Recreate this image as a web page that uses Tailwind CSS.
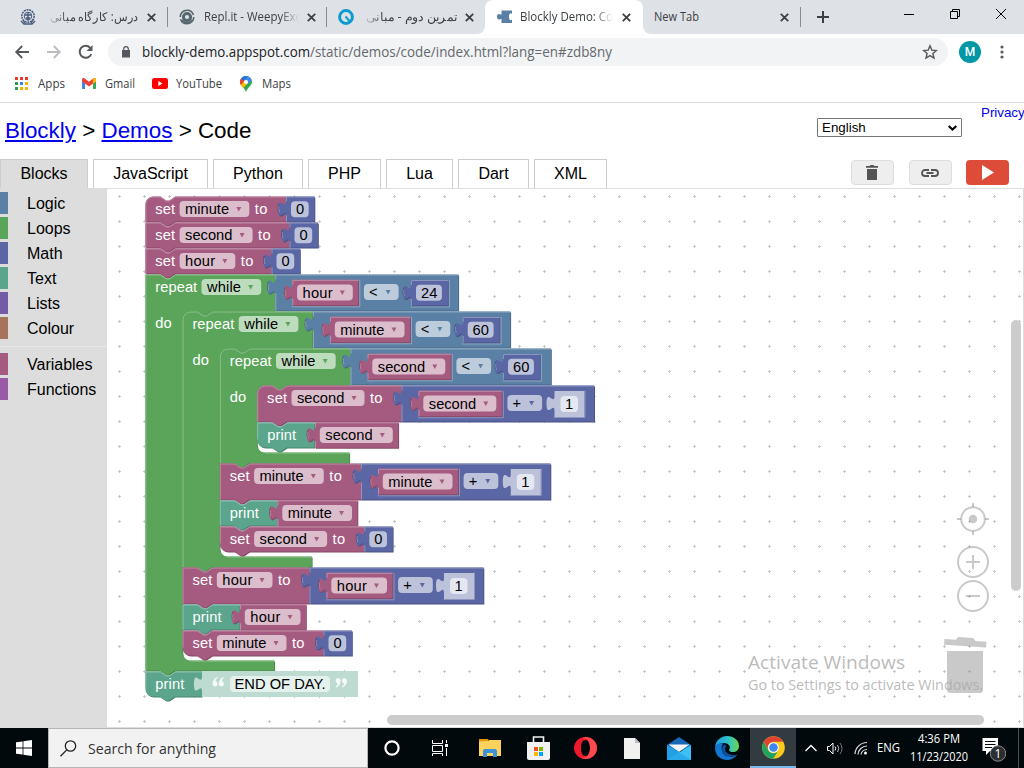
<!DOCTYPE html>
<html lang="en">
<head>
<meta charset="utf-8">
<title>Blockly Demo: Code</title>
<script src="https://cdn.jsdelivr.net/npm/@tailwindcss/browser@4"></script>
</head>
<body class="w-[1024px] h-[768px] overflow-hidden flex flex-col bg-white font-['Open_Sans','Noto_Sans',sans-serif] text-[12px] text-[#3c4043]">

<!-- Tab strip -->
<div class="h-[34px] flex bg-[#dee1e6] shrink-0">
  <div class="w-[168px] flex items-center relative pl-5">
    <svg class="w-4 h-4 shrink-0" viewBox="0 0 16 16" fill="none" stroke="#44597c"><circle cx="8" cy="7" r="6.2" stroke-dasharray="2 .7" stroke-width="1.5"/><circle cx="8" cy="7" r="3.8"/><path d="M8 3v9M5 6h6M6 9h4M1 12l3 3h8l3-3M3 11l2 3M13 11l-2 3" stroke-width="1.3"/></svg>
    <div class="ml-3.5 shrink-0 w-[88px] overflow-hidden mask-l-from-80% mask-l-to-105%"><span data-w="88" class="block h-4">درس: کارگاه مبانی</span></div>
    <svg class="w-[9px] h-[9px] ml-[9px]" viewBox="0 0 9 9" stroke="#3c4043" stroke-width="1.8"><path d="M.8.8l7.4 7.4M8.2.8L.8 8.2"/></svg>
    <div class="absolute right-0 top-[7px] h-5 w-px bg-[#888b90]"></div>
  </div>
  <div class="w-[159px] flex items-center relative pl-[11px]">
    <svg class="w-4 h-4 shrink-0" viewBox="0 0 16 16" fill="none" stroke="#56676e"><circle cx="8" cy="8" r="6.8" stroke-width="1.6" stroke-dasharray="19 2.3"/><circle cx="8" cy="8" r="3.6" stroke-width="3"/><path d="M3 11c2 3 7 3.500 10 0" stroke-width="1.4"/></svg>
    <div class="ml-[9px] shrink-0 w-[95px] overflow-hidden mask-r-from-80% mask-r-to-100%"><span data-w="97" class="block h-4">Repl.it - WeepyExc</span></div>
    <svg class="w-[9px] h-[9px] ml-2" viewBox="0 0 9 9" stroke="#3c4043" stroke-width="1.8"><path d="M.8.8l7.4 7.4M8.2.8L.8 8.2"/></svg>
    <div class="absolute right-0 top-[7px] h-5 w-px bg-[#888b90]"></div>
  </div>
  <div class="w-[158px] flex items-center pl-[11px]">
    <svg class="w-4 h-4 shrink-0" viewBox="0 0 16 16" fill="none"><circle cx="8" cy="8" r="6.4" stroke="#0a9bd0" stroke-width="3"/><path d="M7.500 7.500l4 4.500" stroke="#0a9bd0" stroke-width="2"/></svg>
    <div class="ml-3 shrink-0 w-[91px] overflow-hidden mask-l-from-80% mask-l-to-105%"><span data-w="91" class="block h-4">تمرین دوم - مبانی</span></div>
    <svg class="w-[9px] h-[9px] ml-2" viewBox="0 0 9 9" stroke="#3c4043" stroke-width="1.8"><path d="M.8.8l7.4 7.4M8.2.8L.8 8.2"/></svg>
  </div>
  <div class="w-[158px] flex items-center pl-3 relative bg-white rounded-t-lg">
    <svg class="absolute -left-2 bottom-0 w-2 h-2" viewBox="0 0 8 8"><path d="M8 0v8H0a8 8 0 0 0 8-8z" fill="#fff"/></svg>
    <svg class="absolute -right-2 bottom-0 w-2 h-2" viewBox="0 0 8 8"><path d="M0 0v8h8a8 8 0 0 1-8-8z" fill="#fff"/></svg>
    <svg class="w-4 h-4 shrink-0" viewBox="0 0 16 16"><path d="M4.500 1.500H15v3.500c-1-1.500-3-1-3 2.700s2 4.200 3 2.700V14H4.500v-4C4 9 3.500 10.500 2 10.500S0 9 0 7.500 1 4.800 2.300 5s2 1.200 2.200.3z" fill="#5b80a5"/></svg>
    <div class="ml-[7px] shrink-0 w-[93px] overflow-hidden mask-r-from-80% mask-r-to-100%"><span data-w="93" class="block h-4">Blockly Demo: Co</span></div>
    <svg class="w-[9px] h-[9px] ml-[9px]" viewBox="0 0 9 9" stroke="#3c4043" stroke-width="1.8"><path d="M.8.8l7.4 7.4M8.2.8L.8 8.2"/></svg>
  </div>
  <div class="w-[158px] flex items-center relative pl-[11px]">
    <span data-w="45" class="block h-4">New Tab</span>
    <svg class="w-[9px] h-[9px] ml-[81px]" viewBox="0 0 9 9" stroke="#3c4043" stroke-width="1.8"><path d="M.8.8l7.4 7.4M8.2.8L.8 8.2"/></svg>
    <div class="absolute right-0 top-[7px] h-5 w-px bg-[#888b90]"></div>
  </div>
  <div class="w-[85px] flex items-center pl-4"><svg class="w-3 h-3" viewBox="0 0 12 12" stroke="#3c4043" stroke-width="2"><path d="M6 0v12M0 6h12"/></svg></div>
  <div class="flex h-[28px] items-center">
    <div class="w-[46px] flex justify-center"><svg class="w-[10px] h-[10px]" viewBox="0 0 10 10"><path d="M0 5.500h10" stroke="#000"/></svg></div>
    <div class="w-[46px] flex justify-center"><svg class="w-[10px] h-[10px]" viewBox="0 0 10 10"><path d="M.5 2.500h7v7h-7zM2.500 2V.5h7v7H8" fill="none" stroke="#000"/></svg></div>
    <div class="w-[46px] flex justify-center"><svg class="w-[10px] h-[10px]" viewBox="0 0 10 10"><path d="M0 0l10 10M10 0L0 10" stroke="#000"/></svg></div>
  </div>
</div>

<!-- Address bar -->
<div class="h-9 flex items-center shrink-0 pl-[14px] pr-4">
  <svg class="w-4 h-4" viewBox="0 0 16 16" fill="none" stroke="#55585c" stroke-width="1.8"><path d="M15 8H2.500M8.200 2L2.200 8l6 6"/></svg>
  <svg class="w-4 h-4 ml-4" viewBox="0 0 16 16" fill="none" stroke="#bbbcbf" stroke-width="1.8"><path d="M1 8h12.500M7.800 2l6 6-6 6"/></svg>
  <svg class="w-4 h-4 ml-4" viewBox="0 0 16 16" fill="none" stroke="#55585c" stroke-width="2"><path d="M13.300 10A6 6 0 1 1 12.200 3.800"/><path d="M14.500 1v6h-6z" fill="#55585c" stroke="none"/></svg>
  <div class="ml-[14px] w-[840px] h-7 rounded-full bg-[#f1f3f4] flex items-center pl-[14px] pr-[10px] text-[14px]">
    <svg class="w-2 h-3" viewBox="0 0 8 12"><path d="M0 4h8v7.500H0z" fill="#55585c"/><path d="M1.700 4.500V3a2.300 2.300 0 0 1 4.600 0v1.500" fill="none" stroke="#55585c" stroke-width="1.200"/></svg>
    <span class="ml-3 text-[#202124] block h-4" data-w="168" data-y="13">blockly-demo.appspot.com</span><span class="text-[#65686d] block h-4" data-w="302" data-y="13">/static/demos/code/index.html?lang=en#zdb8ny</span>
    <svg class="w-4 h-4 ml-auto" viewBox="0 0 16 16" fill="none" stroke="#55585c" stroke-width="1.400"><path d="M8 1.800l1.800 4.300 4.600.4-3.500 3 1.100 4.500-4-2.400-4 2.400 1.100-4.500-3.500-3 4.600-.4z"/></svg>
  </div>
  <div class="ml-[11px] w-[22px] h-[22px] rounded-full bg-[#0097a7] text-white text-[12px] font-['Roboto'] font-medium flex items-center justify-center">M</div>
  <svg class="w-1 h-4 ml-[19px]" viewBox="0 0 4 16" fill="#55585c"><circle cx="2" cy="3" r="1.600"/><circle cx="2" cy="8" r="1.600"/><circle cx="2" cy="13" r="1.600"/></svg>
</div>

<!-- Bookmarks -->
<div class="h-[33px] flex items-center pl-[15px] pb-[5px] shrink-0 border-b border-[#dadce0]">
  <svg class="w-[13px] h-[13px]" viewBox="0 0 13 13"><path d="M0 0h3v3H0zM5 0h3v3H5zM10 0h3v3h-3z" fill="#e33b2e"/><path d="M0 5h3v3H0z" fill="#2f9e4f"/><path d="M5 5h3v3H5z" fill="#2f86ee"/><path d="M10 5h3v3h-3z" fill="#f4b400"/><path d="M0 10h3v3H0z" fill="#2f9e4f"/><path d="M5 10h3v3H5zM10 10h3v3h-3z" fill="#f4b400"/></svg>
  <span class="ml-[10px] block h-4" data-w="27">Apps</span>
  <svg class="w-[14px] h-[11px] ml-[17px]" viewBox="0 0 14 11"><path d="M0 2v8.200q0 .8.800.8H3V4z" fill="#4285f4"/><path d="M14 2v8.200q0 .8-.8.800H11V4z" fill="#34a853"/><path d="M0 3.500V1.700C0 0 1.600-.4 2.700.5L7 3.800 11.300.5C12.400-.4 14 0 14 1.700v1.800L7 8.500z" fill="#ea4335"/><path d="M11 .8v4.900l3-2.200V1.700C14 0 12.400-.4 11 .8z" fill="#fbbc04"/></svg>
  <span class="ml-[9px] block h-4" data-w="30">Gmail</span>
  <svg class="w-4 h-[11px] ml-[17px]" viewBox="0 0 16 11"><rect width="16" height="11" rx="2.500" fill="#f00"/><path d="M6.300 3v5l4.200-2.500z" fill="#fff"/></svg>
  <span class="ml-2 block h-4" data-w="46">YouTube</span>
  <svg class="w-3 h-4 ml-[18px]" viewBox="0 0 12 16"><path d="M6 0a6 6 0 0 0-6 6c0 3.500 4 5 6 10 2-5 6-6.500 6-10a6 6 0 0 0-6-6z" fill="#34a853"/><path d="M6 0a6 6 0 0 0-5 2.500L4 5l4.500-4.500Q7.500 0 6 0z" fill="#1a73e8"/><path d="M1 2.500A6 6 0 0 0 .8 9L4.500 5.200z" fill="#ea4335"/><path d="M.8 9q.7 1.400 2.400 3L11 4Q10 1.500 8.500.6z" fill="#fbbc04"/><path d="M8.500.5Q11 1.500 11.700 4.300L8 8 4.500 4.800z" fill="#4285f4"/><circle cx="6" cy="6" r="2.100" fill="#fff"/></svg>
  <span class="ml-[10px] block h-4" data-w="29">Maps</span>
</div>

<!-- Page -->
<div class="h-[625px] shrink-0 flex flex-col font-['Liberation_Sans',Arial,sans-serif] text-black text-[16px]">
  <div class="h-[56px] flex">
    <h1 class="shrink-0 pl-[5px] pt-[11px] text-[22.400px] leading-[33px] w-[817px]"><a class="text-[#0000ee] underline">Blockly</a> &gt; <a class="text-[#0000ee] underline">Demos</a> &gt; Code</h1>
    <div class="shrink-0 mt-[15px] w-[145px] h-[19px] border border-[#767676] flex items-center pl-1 pr-1 text-[13.333px] rounded-[1px]">English<svg class="ml-auto w-[9px] h-[6px]" viewBox="0 0 9 6" fill="none" stroke="#000" stroke-width="2"><path d="M.7.900l3.800 3.600L8.300.900"/></svg></div>
    <a class="ml-[19px] mt-[1px] text-[13.333px] leading-[17px] text-[#0000ee]">Privacy</a>
  </div>
  <div class="h-[30px] flex border-b border-[#ddd] pr-[15px]">
    <div class="w-[88px] h-[29px] bg-[#ddd] border border-b-0 border-[#ccc] flex items-center justify-center">Blocks</div>
    <div class="ml-[5px] w-[115px] h-[29px] border border-b-0 border-[#ccc] flex items-center justify-center">JavaScript</div>
    <div class="ml-[5px] w-[90px] h-[29px] border border-b-0 border-[#ccc] flex items-center justify-center">Python</div>
    <div class="ml-[5px] w-[73px] h-[29px] border border-b-0 border-[#ccc] flex items-center justify-center">PHP</div>
    <div class="ml-[5px] w-[67px] h-[29px] border border-b-0 border-[#ccc] flex items-center justify-center">Lua</div>
    <div class="ml-[5px] w-[71px] h-[29px] border border-b-0 border-[#ccc] flex items-center justify-center">Dart</div>
    <div class="ml-[5px] w-[73px] h-[29px] border border-b-0 border-[#ccc] flex items-center justify-center">XML</div>
    <div class="ml-auto mt-[1px] w-[43px] h-[25px] rounded bg-[#eee] border border-[#ddd] flex items-center justify-center pr-px"><svg class="w-3 h-[15px]" viewBox="0 0 12 15" fill="#555"><path d="M0 1h3.500l1-1h3l1 1H12v1.800H0zM1 4h10v11H1z"/></svg></div>
    <div class="ml-[15px] mt-[1px] w-[43px] h-[25px] rounded bg-[#eee] border border-[#ddd] flex items-center justify-center pr-px"><svg class="w-[18px] h-2" viewBox="0 0 18 8" fill="none" stroke="#555" stroke-width="1.800"><path d="M8 1H4a3 3 0 0 0 0 6h4M10 1h4a3 3 0 0 1 0 6h-4M5.500 4h7"/></svg></div>
    <div class="ml-[14px] mt-[1px] w-[43px] h-[25px] rounded bg-[#dd4b39] flex items-center justify-center"><svg class="w-3 h-[15px]" viewBox="0 0 12 15"><path d="M0 0l12 7.500L0 15z" fill="#fff"/></svg></div>
  </div>
  <div class="h-[539px] flex">
    <div class="w-[107px] bg-[#ddd] pt-[3px] flex flex-col leading-[24px]">
      <div class="h-[22px] mb-[3px] border-l-8 border-[#5b80a5] pl-[19px]">Logic</div>
      <div class="h-[22px] mb-[3px] border-l-8 border-[#5ba55b] pl-[19px]">Loops</div>
      <div class="h-[22px] mb-[3px] border-l-8 border-[#5b67a5] pl-[19px]">Math</div>
      <div class="h-[22px] mb-[3px] border-l-8 border-[#5ba58c] pl-[19px]">Text</div>
      <div class="h-[22px] mb-[3px] border-l-8 border-[#745ba5] pl-[19px]">Lists</div>
      <div class="h-[22px] border-l-8 border-[#a5745b] pl-[19px]">Colour</div>
      <div class="h-px my-[7px] bg-[#e8e8e8]"></div>
      <div class="h-[22px] mb-[3px] -mt-px border-l-8 border-[#a55b80] pl-[19px]">Variables</div>
      <div class="h-[22px] border-l-8 border-[#995ba5] pl-[19px]">Functions</div>
    </div>
    <svg id="workspace" class="w-[917px] h-[539px] block" viewBox="107 189 917 539" font-family="Liberation Sans, Arial, sans-serif" font-size="14.667">
      <defs><pattern id="grid" x="107" y="184" width="25" height="25" patternUnits="userSpaceOnUse"><path d="M11 12.500h3M12.500 11v3" stroke="#c8c8c8"/></pattern></defs>
      <rect x="107" y="189" width="917" height="539" fill="url(#grid)"/>
      <g id="blocks"></g>
      <path d="M107 727.500H1023.500V189" fill="none" stroke="#ddd"/>
      <g fill="#ccc"><rect x="1011" y="320" width="10" height="271" rx="5"/><rect x="387" y="715" width="597" height="10" rx="5"/></g>
      <g fill="none" stroke="#888" stroke-opacity=".45" stroke-width="2">
        <circle cx="973" cy="519" r="11.800"/><path d="M973 503v4M973 531v4M957 519h4M985 519h4"/><circle cx="973" cy="519" r="4.300" fill="#888" fill-opacity=".45" stroke="none"/>
        <circle cx="973" cy="562" r="15"/><path d="M966 562h14M973 555v14"/>
        <circle cx="973" cy="596" r="15"/><path d="M966 596h14"/>
      </g>
      <g fill="#888" fill-opacity=".45"><path d="M944.500 639l11.500.800 2-2.800 15 1 2.500 3 11 .800-.5 5.700-42-2.700z"/><path d="M947 651h36v38.500q0 3.500-3.500 3.500h-29q-3.500 0-3.500-3.500z"/></g>
      <g font-family="Open Sans, Noto Sans, sans-serif" fill="#a9a9a9" fill-opacity=".8"><text x="748" y="669" font-size="19" textLength="157" lengthAdjust="spacingAndGlyphs">Activate Windows</text><text x="748" y="690" font-size="14" textLength="235" lengthAdjust="spacingAndGlyphs">Go to Settings to activate Windows.</text></g>
    </svg>
  </div>
</div>

<!-- Taskbar -->
<div class="h-10 bg-[#01090d] flex shrink-0 text-white items-center">
  <div class="w-12 flex justify-center shrink-0"><svg class="w-4 h-4" viewBox="0 0 16 16" fill="#fff"><path d="M0 2.300L6.600 1.400v6.200H0zM7.400 1.300L16 0v7.600H7.400zM0 8.400h6.600v6.200L0 13.700zM7.400 8.400H16V16l-8.600-1.300z"/></svg></div>
  <div class="w-80 shrink-0 h-10 bg-[#f2f2f2] border border-[#b5b5b5] flex items-center pl-[11px] text-[#333] text-[14px]">
    <svg class="w-[17px] h-[17px]" viewBox="0 0 17 17" fill="none" stroke="#222" stroke-width="1.300"><circle cx="10.500" cy="6" r="5.200"/><path d="M6.700 9.900L.5 16.300"/></svg>
    <span class="ml-[11px] block h-4" data-w="128" data-y="14">Search for anything</span>
  </div>
  <div class="w-12 shrink-0 flex justify-center"><svg class="w-4 h-4" viewBox="0 0 16 16"><circle cx="8" cy="8" r="6.600" fill="none" stroke="#fff" stroke-width="2.200"/></svg></div>
  <div class="w-12 shrink-0 flex justify-center"><svg class="w-4 h-4" viewBox="0 0 16 16" fill="none" stroke="#fff"><path d="M.5 0v3.500h10V0M.5 5.500h10v6H.5zM.5 16v-2.500h10V16M14.500 0v3M14.500 8v8"/><path d="M13 4h3v3h-3z" fill="#fff" stroke="none"/></svg></div>
  <div class="w-[51px] shrink-0 flex justify-center"><svg class="w-[22px] h-[18px]" viewBox="0 0 22 18"><path d="M0 0h9l1 2v4H0z" fill="#e09a00"/><path d="M0 2.500l10-.5V1h12v16H0z" fill="#ffd25e"/><path d="M4 18v-6q0-2 2-2h10q2 0 2 2v6h-4v-4H8v4z" fill="#3b93da"/></svg></div>
  <div class="w-[46px] shrink-0 flex justify-center"><svg class="w-[23px] h-6" viewBox="0 0 23 24"><path d="M6.500 6V1h10v5" fill="none" stroke="#f2f2f2" stroke-width="1.600"/><path d="M0 6h23v16q0 2-2 2H2q-2 0-2-2z" fill="#f2f2f2"/><path d="M7 11h4v4H7z" fill="#f25022"/><path d="M12 11h4v4h-4z" fill="#7fba00"/><path d="M7 16h4v4H7z" fill="#ffb900"/><path d="M12 16h4v4h-4z" fill="#00a4ef"/></svg></div>
  <div class="w-[48px] shrink-0 flex justify-center"><svg class="w-[23px] h-[22px]" viewBox="0 0 23 22"><path d="M11.500 0a11.500 11 0 1 0 0 22 11.500 11 0 1 0 0-22zm0 3c3 0 4.500 3.500 4.500 8s-1.500 8-4.500 8S7 15.500 7 11s1.500-8 4.500-8z" fill="#f0182d" fill-rule="evenodd"/><path d="M11.500 0C17 0 23 4 23 11s-6 11-11.500 11c-2 0-4-1-5-2 6 3 9.500-3 9.500-9S13 0 8 2q1.500-2 3.500-2z" fill="#fa4a4d"/></svg></div>
  <div class="w-[46px] shrink-0 flex justify-center"><svg class="w-4 h-[21px]" viewBox="0 0 16 21"><path d="M0 0h11l5 5v16H0z" fill="#f1f1ef"/><path d="M11 0l5 5h-5z" fill="#bdbdbd"/></svg></div>
  <div class="w-[48px] shrink-0 flex justify-center"><svg class="w-6 h-[23px]" viewBox="0 0 24 23"><path d="M0 8l12-8 12 8-1 5H1z" fill="#1567b8"/><path d="M1.500 7.500h21L12 15z" fill="#f3f6f8"/><path d="M0 8l14 8L0 23z" fill="#28a8ea"/><path d="M24 8L0 23h24z" fill="#3cc0f5"/><path d="M0 8v15h24z" fill="#1e9be2" fill-opacity=".6"/></svg></div>
  <div class="w-[47px] shrink-0 flex justify-center"><svg class="w-6 h-6" viewBox="0 0 24 24"><defs><linearGradient id="edgeTop"><stop offset="0" stop-color="#1e9fe8"/><stop offset=".55" stop-color="#2fc2c9"/><stop offset="1" stop-color="#67d64a"/></linearGradient></defs><path d="M0 11C1 4 6 0 12 0c7 0 12 4.500 12 10 0 4-3 6-6 6-3.500 0-4.500-1.500-3.500-3C16 10 13 7 9 7c-4 0-7 1.500-9 4z" fill="url(#edgeTop)"/><path d="M0 12c.5-4 5-5.500 8.500-4.500C5 10 6 19 15 20.500c3 .5 5-.5 7.500-2C20 22 16 24 12 24 5 24 0 19 0 12z" fill="#1476cf"/><path d="M9 8.500C4.500 13 7 22 15 20.500c3.500 0 5.500-.8 7.500-2-1 .300-3 .800-5 .500-6-.800-9.500-5-6-9z" fill="#0c4fa0"/></svg></div>
  <div class="w-[46px] shrink-0 h-10 bg-[#323c40] border-b-2 border-[#76b9ed] flex justify-center items-center"><svg class="w-[23px] h-[23px]" viewBox="0 0 24 24"><circle cx="12" cy="12" r="11.800" fill="#fbc91c"/><path d="M1.800 6A11.800 11.800 0 0 1 22.200 6H12a6 6 0 0 0-5.200 9z" fill="#e04334"/><path d="M1.800 6a11.800 11.800 0 0 0 10 17.800L17 15a6 6 0 0 1-10.300 0z" fill="#1ea362"/><circle cx="12" cy="12" r="5.600" fill="#fff"/><circle cx="12" cy="12" r="4.500" fill="#4285f4"/></svg></div>
  <svg class="w-3 h-2 ml-[9px] shrink-0" viewBox="0 0 12 8" fill="none" stroke="#fff" stroke-width="1.300"><path d="M.5 7L6 1.500 11.500 7"/></svg>
  <svg class="w-4 h-[13px] ml-[10px] shrink-0" viewBox="0 0 16 13" fill="none" stroke="#fff"><path d="M.5 4.500h2L6 1v11L2.500 8.500h-2z"/><path d="M8 4.500q1.500 2 0 4"/><path d="M10.500 3q2.500 3.500 0 7" stroke="#bbb"/><path d="M13 1q4 5.500 0 11" stroke="#777"/></svg>
  <svg class="w-[13px] h-[14px] ml-[11px] shrink-0" viewBox="0 0 13 14" fill="none" stroke="#ddd" stroke-width="1.200"><path d="M1 13A12 12 0 0 1 13 1.500M4 13.500A9 9 0 0 1 13 5M7 13.500A6 6 0 0 1 13 8.500"/><circle cx="11.500" cy="12" r="1.500" fill="#fff" stroke="none"/></svg>
  <span class="ml-[10px] block h-4" data-w="23">ENG</span>
  <div class="ml-[10px] w-[58px] shrink-0 flex flex-col items-center gap-[2px]"><span class="block h-4" data-w="42">4:36 PM</span><span class="block h-4" data-w="58">11/23/2020</span></div>
  <svg class="w-6 h-6 ml-[14px] mt-1 shrink-0" viewBox="0 0 24 24"><path d="M.500 0h15.500v13H8l-4 4v-4H.500z" fill="#fff"/><path d="M3 3.500h10.500M3 6.500h10.500M3 9.500h7" stroke="#01090d" stroke-width="1.200"/><circle cx="16" cy="15.500" r="7.700" fill="#2b2f31" stroke="#8a8a8a"/><text x="16" y="20" font-size="12" fill="#fff" text-anchor="middle" font-family="Open Sans, sans-serif">1</text></svg>
  <div class="ml-[12px] w-px h-10 bg-[#4a5052]"></div>
</div>

<script>
// Set each label in a text box of fixed width.
document.querySelectorAll('[data-w]').forEach(el => {
  const w = el.dataset.w, size = el.closest('.text-\\[14px\\]') ? 14 : 12;
  el.innerHTML = `<svg width="${w}" height="16" class="block shrink-0 overflow-visible" fill="currentColor"><text y="${el.dataset.y || 12}" font-size="${size}" textLength="${w}" lengthAdjust="spacingAndGlyphs">${el.textContent}</text></svg>`;
});

// Block colours by category: fill, bevel highlight, bevel shadow.
const C = {
  v: ['#a55b80', '#c08ca6', '#844966'], m: ['#5b67a5', '#8c95c0', '#495284'],
  l: ['#5b80a5', '#8ca6c0', '#496684'], r: ['#5ba55b', '#8cc08c', '#498449'],
  t: ['#5ba58c', '#8cc0af', '#498470']
};
let out = '';
const tab = 'c0-10-8 8-8-7.500s8 2.500 8-7.500';
const notchR = 'l6 4 3 0 6 -4', notchL = 'l-6 4 -3 0 -6 -4';
const path = (d, c, hi) => {
  const p = C[c];
  out += `<path d="${d}" fill="${p[2]}" transform="translate(.8 1)"/><path d="${d}" fill="${p[0]}"/>`;
  if (hi) out += `<path d="${hi}" fill="none" stroke="${p[1]}"/>`;
};
const text = (x, y, s, w, fill = '#fff') => { out += `<text x="${x}" y="${y}" fill="${fill}" textLength="${w}">${s}</text>`; };
const box = (x, y, w) => { out += `<rect x="${x}" y="${y}" width="${w}" height="16" rx="4" fill="#fff" fill-opacity=".6"/>`; };
const W = { minute: 44, second: 47.3, hour: 30, 'while': 34 };
function dropdown(x, y, s, c, dy = 13) {
  const fw = W[s] + 25.700;
  box(x, y, fw); text(x + 5.500, y + dy, s, W[s], '#000');
  out += `<path d="M${x + fw - 13} ${y + 6}h5l-2.500 4.500z" fill="${C[c][0]}"/>`;
  return x + fw;
}
function stmtPath(x, y, w, h, first, last) {
  return (first ? `M${x} ${y + 8}a8 8 0 0 1 8-8` : `M${x} ${y}`) + `H${x + 15}${notchR}H${x + w}V${y + h}H${x + 29.500}${notchL}` + (last ? `H${x + 8}a8 8 0 0 1-8-8z` : `H${x}z`);
}
function stmtHi(x, y, w, h, first, last) {
  return `M${x + .5} ${y + h - (last ? 8 : 0)}` + (first ? `V${y + 8}a7.500 7.500 0 0 1 7.500-7.500` : `V${y + .5}`) + `H${x + 15}${notchR}H${x + w}`;
}
function value(x, y, w, h, c, inset) {
  path(`M${x} ${y}h${w}v${h}h${-w}V${y + 20}${tab}z`, c, `M${x + w} ${y + .5}H${x + .5}V${y + 5}M${x + .5} ${y + h}V${y + 19}M${x - 6.500} ${y + 15.500}q-1.500-3-.800-6`);
  out += `<path d="M${x - 7.800} ${y + 15}q-.700-4 .500-7.500" fill="none" stroke="#000" stroke-opacity=".25"/>`;
  if (inset) out += `<path d="M${x - .5} ${y + h + 1.500}H${x + w + 1.500}V${y}" fill="none" stroke="${C[inset][1]}"/>`;
}
function num(x, y, s, inset) {
  const tw = s.length * 8.200, w = inset ? tw + 20.500 : 28.500, h = inset ? 25.500 : 25;
  value(x, y, w, h, 'm', inset);
  box(x + 5, y + 4.700, tw + 9.500); text(x + 9.900, y + (inset ? 18 : 17.400), s, tw, '#000');
}
function variable(x, y, name, inset) {
  value(x, y, W[name] + 36, 25.500, 'v', inset);
  dropdown(x + 4.800, y + 4.700, name, 'v', inset ? 13.300 : 12.700);
}
function set(x, y, name, end, h, first, last) {
  path(stmtPath(x, y, end - x, h, first, last), 'v', stmtHi(x, y, end - x, h, first, last));
  text(x + 9.900, y + 17.400, 'set', 20, '#fff');
  const e = dropdown(x + 34.300, y + 4.500, name, 'v', 12.900);
  text(e + 5.500, y + 17.400, 'to', 12.500, '#fff');
}
function print(x, y, end, last) {
  path(stmtPath(x, y, end - x, 25, false, last), 't', stmtHi(x, y, end - x, 25, false, last));
  text(x + 10, y + 17.400, 'print', 29, '#fff');
}
function repeat(x, y, end, innerBottom, bottom, first) {
  const ix = x + 37.200, iy = y + 37;
  const d = (first ? `M${x} ${y + 8}a8 8 0 0 1 8-8` : `M${x} ${y}`) + `H${x + 15}${notchR}H${end}V${iy}H${ix + 29.500}${notchL}H${ix + 8}a8 8 0 0 0-8 8V${innerBottom - 8}a8 8 0 0 0 8 8H${end - .7}V${bottom}H${x + 29.500}${notchL}H${x}z`;
  path(d, 'r', stmtHi(x, y, end - x, bottom - y, first, false) + `M${ix + 8} ${innerBottom + .5}H${end - .7}`);
  text(x + 9.900, y + 17.400, 'repeat', 42, '#fff');
  dropdown(x + 56.200, y + 4.500, 'while', 'r', 12.900);
  text(x + 9.900, iy + 16.800, 'do', 16.500, '#fff');
}
// Two-operand block: variable, operator, number.
function binary(x, y, w, c, name, op, n, nx) {
  value(x, y, w, 36, c);
  variable(x + 17, y + 5.300, name, c);
  const ox = x + 17 + W[name] + 36 + 5.600;
  box(ox, y + 9.500, 34.700);
  out += `<text x="${ox + 5.200}" y="${y + 22}" fill="#000">${op === '<' ? '&lt;' : op}</text><path d="M${ox + 21.700} ${y + 15.500}h5l-2.500 4.500z" fill="${C[c][0]}"/>`;
  if (n === '1') {
    out += `<path d="M${nx} ${y + 5.500}h30v26.500h-30V${y + 25.500}${tab}z" fill="#bdc2db"/><path d="M${nx - .5} ${y + 32}h31V${y + 5}" fill="none" stroke="#8c95c0"/><rect x="${nx + 6}" y="${y + 10.500}" width="17.500" height="16" rx="4" fill="#fff" fill-opacity=".6"/>`;
    text(nx + 10.500, y + 23.500, '1', 8.200, '#000');
  } else num(nx, y + 5.500, n, c);
}

const x0 = 145.300, x1 = 182.500, x2 = 219.800, x3 = 257.200;
set(x0, 196.500, 'minute', 286, 25, true); num(286, 196.500, '0');
set(x0, 222.500, 'second', 289.500, 25); num(289.500, 222.500, '0');
set(x0, 248.500, 'hour', 271.500, 25); num(271.500, 248.500, '0');
repeat(x0, 274.500, 275, 660.500, 670.500, false);
binary(275.300, 274.500, 183, 'l', 'hour', '<', '24', 411);
repeat(x1, 311.500, 312.500, 556.500, 567, true);
binary(313, 311.500, 197.300, 'l', 'minute', '<', '60', 462.700);
repeat(x2, 348.500, 350, 452.500, 463, true);
binary(350.500, 348.500, 200.500, 'l', 'second', '<', '60', 503);
set(x3, 385.500, 'second', 401.500, 36, true); binary(401.500, 385.500, 192.700, 'm', 'second', '+', '1', 554.500);
print(x3, 422.500, 314.300, true); variable(315, 422.300, 'second');
set(x2, 463.500, 'minute', 361, 36); binary(361, 463.500, 189.500, 'm', 'minute', '+', '1', 510.800);
print(x2, 500.500, 277, false); variable(277.500, 500.300, 'minute');
set(x2, 526.500, 'second', 364.300, 25, false, true); num(364.300, 526.500, '0');
set(x1, 567.500, 'hour', 309.500, 36); binary(309.500, 567.500, 174, 'm', 'hour', '+', '1', 444);
print(x1, 604.500, 239.500, false); variable(240, 604.300, 'hour');
set(x1, 630.500, 'minute', 323.500, 25, false, true); num(323.500, 630.500, '0');
print(x0, 671.500, 202, true);
out += `<path d="M202 671h156v26H202V691.500${tab}z" fill="#bddbd1"/>`;
box(230, 676, 100); text(234.500, 689, 'END OF DAY.', 91, '#000');
const quote = 'M0 7.500C0 3.500 2 1 4.500 0l.6 1C3.500 2 3 3 3.200 4.300A2.600 2.600 0 1 1 0 7.500z';
out += `<g fill="#fff" fill-opacity=".85"><path d="${quote}" transform="translate(212.500 677)"/><path d="${quote}" transform="translate(218.800 677)"/><path d="${quote}" transform="translate(347 687.500) rotate(180)"/><path d="${quote}" transform="translate(340.700 687.500) rotate(180)"/></g>`;
document.getElementById('blocks').innerHTML = out;
</script>
</body>
</html>
